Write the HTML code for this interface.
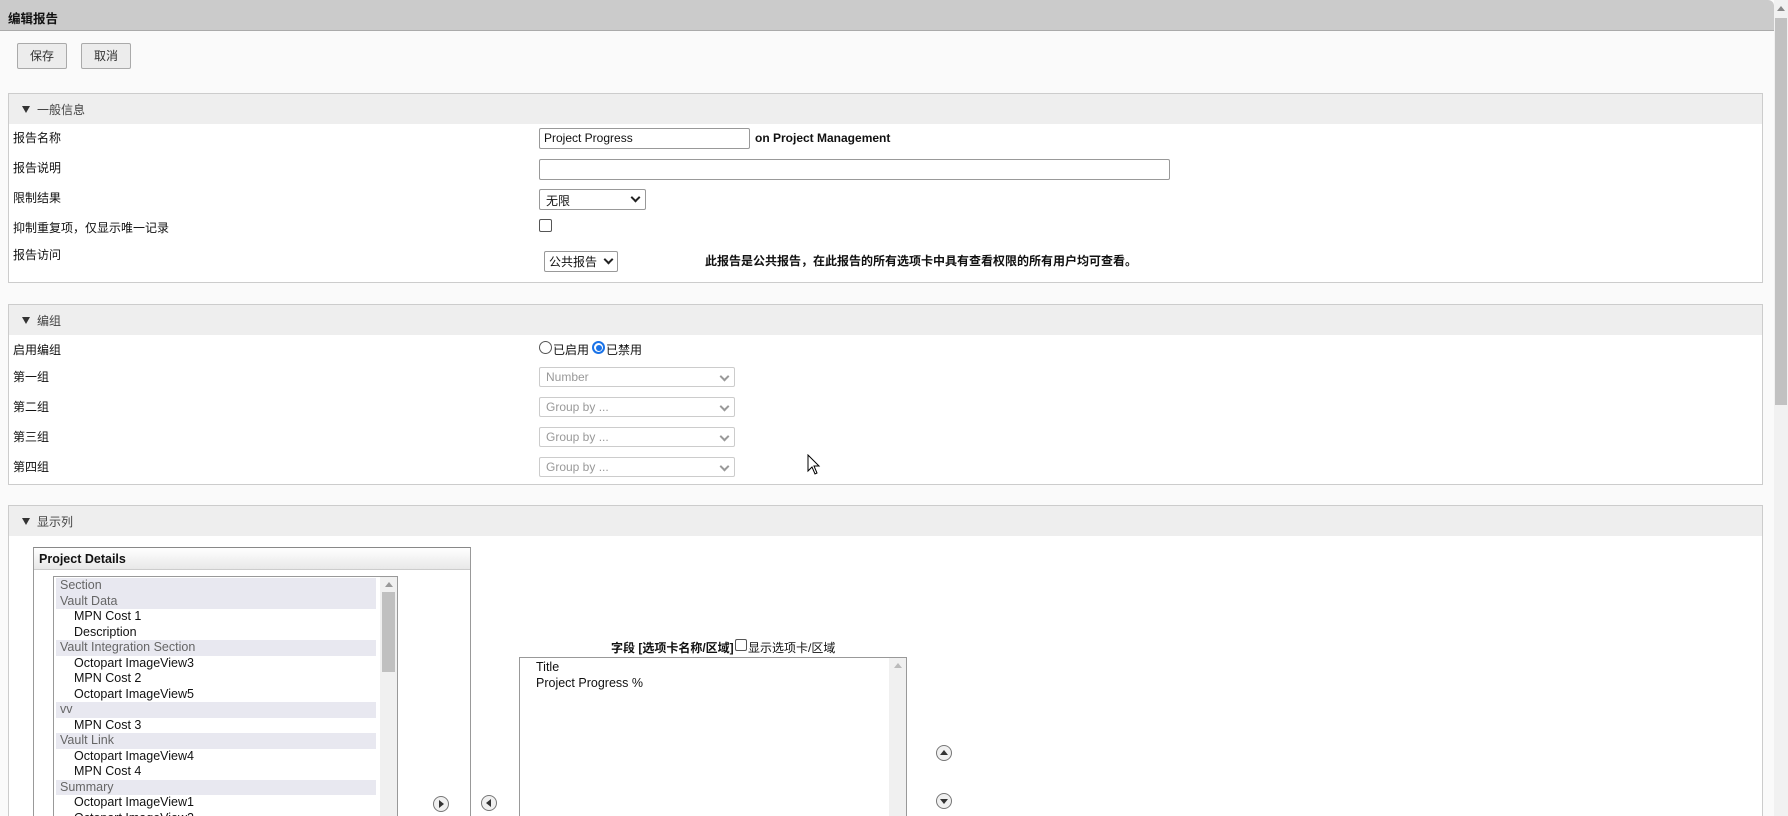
<!DOCTYPE html>
<html style="height:816px;overflow:hidden"><head><meta charset="utf-8"><style>
*{box-sizing:border-box}
body{margin:0;width:1788px;height:816px;overflow:hidden;background:#fafafa;font-family:"Liberation Sans","Noto Sans CJK SC",sans-serif;font-size:12px;color:#111;position:relative}
.a{position:absolute}
.title{left:0;top:0;width:1774px;height:31px;background:#cbcbcb;border-bottom:1px solid #aaa;border-radius:0 6px 0 0;font-weight:bold;font-size:12.5px;padding:8px 0 0 8px}
.btn{top:43px;height:26px;border:1px solid #aaa;background:#ececec;border-radius:2px;text-align:center;line-height:24px;color:#333}
.sec{left:8px;width:1755px;border:1px solid #ccc;background:#fff}
.sh{position:absolute;left:0;top:0;right:0;height:30px;background:#eee;padding:7px 0 0 28px;color:#444}
.sh:before{content:"";position:absolute;left:13px;top:12px;border-left:4.5px solid transparent;border-right:4.5px solid transparent;border-top:7px solid #333}
.lbl{left:13px}
.inp{border:1px solid #999;background:#fff;height:21px;padding:2px 4px;border-radius:2px}
.sel{border:1px solid #999;background:#fff;height:21px;padding:2px 6px;border-radius:2px}
.gsel{left:539px;width:196px;height:20px;border:1px solid #ccc;border-radius:2px;background:#fff;color:#999;padding:2px 6px;font-size:12px}
.chev{position:absolute;right:6px;top:5px;width:7px;height:7px;border-right:2px solid #666;border-bottom:2px solid #666;transform:rotate(45deg)}
.gsel .chev{border-color:#999}
.it{position:absolute;left:2px;width:320px;height:15.5px;line-height:15.5px;padding-left:18px;font-size:12.5px}
.g{background:#e8e8f0;color:#666;padding-left:4px}
.circ{position:absolute;width:16px;height:16px;border:1px solid #777;border-radius:50%;background:#f0f0f0}
</style></head><body>
<div class="a title">编辑报告</div>
<div class="a btn" style="left:17px;width:50px">保存</div>
<div class="a btn" style="left:81px;width:50px">取消</div>

<div class="a sec" style="top:93px;height:190px">
<div class="sh">一般信息</div>
</div>
<div class="a lbl" style="top:129px">报告名称</div>
<div class="a lbl" style="top:159px">报告说明</div>
<div class="a lbl" style="top:189px">限制结果</div>
<div class="a lbl" style="top:219px">抑制重复项，仅显示唯一记录</div>
<div class="a lbl" style="top:246px">报告访问</div>
<div class="a inp" style="left:539px;top:128px;width:211px">Project Progress</div>
<div class="a" style="left:755px;top:131px;font-weight:bold">on Project Management</div>
<div class="a inp" style="left:539px;top:159px;width:631px"></div>
<div class="a sel" style="left:539px;top:189px;width:107px">无限<span class="chev" style="border-color:#222;top:4px"></span></div>
<div class="a" style="left:539px;top:219px;width:13px;height:13px;border:1px solid #555;border-radius:2px;background:#fff"></div>
<div class="a sel" style="left:544px;top:251px;width:74px;padding:1px 4px">公共报告<span class="chev" style="border-color:#222;top:4px;right:5px"></span></div>
<div class="a" style="left:705px;top:252px;font-weight:bold;font-size:12px">此报告是公共报告，在此报告的所有选项卡中具有查看权限的所有用户均可查看。</div>

<div class="a sec" style="top:304px;height:181px">
<div class="sh">编组</div>
</div>
<div class="a lbl" style="top:341px">启用编组</div>
<div class="a lbl" style="top:368px">第一组</div>
<div class="a lbl" style="top:398px">第二组</div>
<div class="a lbl" style="top:428px">第三组</div>
<div class="a lbl" style="top:458px">第四组</div>
<div class="a" style="left:539px;top:341px;width:13px;height:13px;border:1px solid #555;border-radius:50%;background:#fff"></div>
<div class="a" style="left:553px;top:341px">已启用</div>
<div class="a" style="left:592px;top:341px;width:13px;height:13px;border:2px solid #1a73e8;border-radius:50%;background:#fff"><div style="margin:1.5px;width:6px;height:6px;border-radius:50%;background:#1a73e8"></div></div>
<div class="a" style="left:606px;top:341px">已禁用</div>
<div class="a gsel" style="top:367px">Number<span class="chev"></span></div>
<div class="a gsel" style="top:397px">Group by ...<span class="chev"></span></div>
<div class="a gsel" style="top:427px">Group by ...<span class="chev"></span></div>
<div class="a gsel" style="top:457px">Group by ...<span class="chev"></span></div>
<svg class="a" style="left:807px;top:454px" width="14" height="22" viewBox="0 0 14 22"><path d="M1 1 L1 17 L5 13 L8 20 L10 19 L7 12 L12 12 Z" fill="#fff" stroke="#000" stroke-width="1"/></svg>

<div class="a sec" style="top:505px;height:311px;border-bottom:none">
<div class="sh">显示列</div>
</div>
<div class="a" style="left:33px;top:547px;width:438px;height:269px;border:1px solid #999;border-top-color:#888;border-bottom:none;background:#fff;overflow:hidden">
<div style="height:22px;background:linear-gradient(#fff,#e8e8e8);border-bottom:1px solid #ccc;font-weight:bold;font-size:12.5px;padding:4px 0 0 5px">Project Details</div>
<div style="position:absolute;left:19px;top:28px;width:345px;height:241px;border:1px solid #999;border-bottom:none;background:#fff;overflow:hidden">
<div class="it g" style="top:1px">Section</div>
<div class="it g" style="top:16.5px">Vault Data</div>
<div class="it" style="top:32px">MPN Cost 1</div>
<div class="it" style="top:47.5px">Description</div>
<div class="it g" style="top:63px">Vault Integration Section</div>
<div class="it" style="top:78.5px">Octopart ImageView3</div>
<div class="it" style="top:94px">MPN Cost 2</div>
<div class="it" style="top:109.5px">Octopart ImageView5</div>
<div class="it g" style="top:125px">vv</div>
<div class="it" style="top:140.5px">MPN Cost 3</div>
<div class="it g" style="top:156px">Vault Link</div>
<div class="it" style="top:171.5px">Octopart ImageView4</div>
<div class="it" style="top:187px">MPN Cost 4</div>
<div class="it g" style="top:202.5px">Summary</div>
<div class="it" style="top:218px">Octopart ImageView1</div>
<div class="it" style="top:233.5px;height:7px;overflow:hidden">Octopart ImageView2</div>
<div style="position:absolute;right:0;top:0;width:17px;height:241px;background:#f0f0f0"><div style="margin:5px auto 0;width:0;border-left:4px solid transparent;border-right:4px solid transparent;border-bottom:5px solid #999"></div><div style="margin:5px 2px 0;height:80px;background:#c0c0c0"></div></div>
</div>
</div>
<div class="circ" style="left:433px;top:796px"><div style="margin:3px 0 0 5px;border-top:4px solid transparent;border-bottom:4px solid transparent;border-left:5px solid #333;width:0"></div></div>
<div class="circ" style="left:481px;top:795px"><div style="margin:3px 0 0 4px;border-top:4px solid transparent;border-bottom:4px solid transparent;border-right:5px solid #333;width:0"></div></div>
<div class="a" style="left:611px;top:639px;font-weight:bold;font-size:12px">字段 [选项卡名称/区域]</div>
<div class="a" style="left:735px;top:639px;width:12px;height:12px;border:1px solid #555;border-radius:2px;background:#fff"></div>
<div class="a" style="left:748px;top:639px;font-size:12px">显示选项卡/区域</div>
<div class="a" style="left:519px;top:657px;width:388px;height:159px;border:1px solid #999;border-bottom:none;background:#fff">
<div style="position:absolute;left:16px;top:1px;line-height:16px;font-size:12.5px">Title<br>Project Progress %</div>
<div style="position:absolute;right:0;top:0;width:17px;height:158px;background:#f0f0f0"><div style="margin:5px auto 0;width:0;border-left:4px solid transparent;border-right:4px solid transparent;border-bottom:5px solid #bbb"></div></div>
</div>
<div class="circ" style="left:936px;top:745px"><div style="margin:4px 0 0 3px;border-left:4px solid transparent;border-right:4px solid transparent;border-bottom:5px solid #333;width:0"></div></div>
<div class="circ" style="left:936px;top:793px"><div style="margin:5px 0 0 3px;border-left:4px solid transparent;border-right:4px solid transparent;border-top:5px solid #333;width:0"></div></div>

<div class="a" style="left:1774px;top:0;width:14px;height:816px;background:#f1f1f1">
<div style="margin:6px auto 0;width:0;border-left:4px solid transparent;border-right:4px solid transparent;border-bottom:5px solid #888"></div>
<div style="position:absolute;left:1px;top:18px;width:12px;height:387px;background:#c1c1c1"></div>
</div>
</body></html>
